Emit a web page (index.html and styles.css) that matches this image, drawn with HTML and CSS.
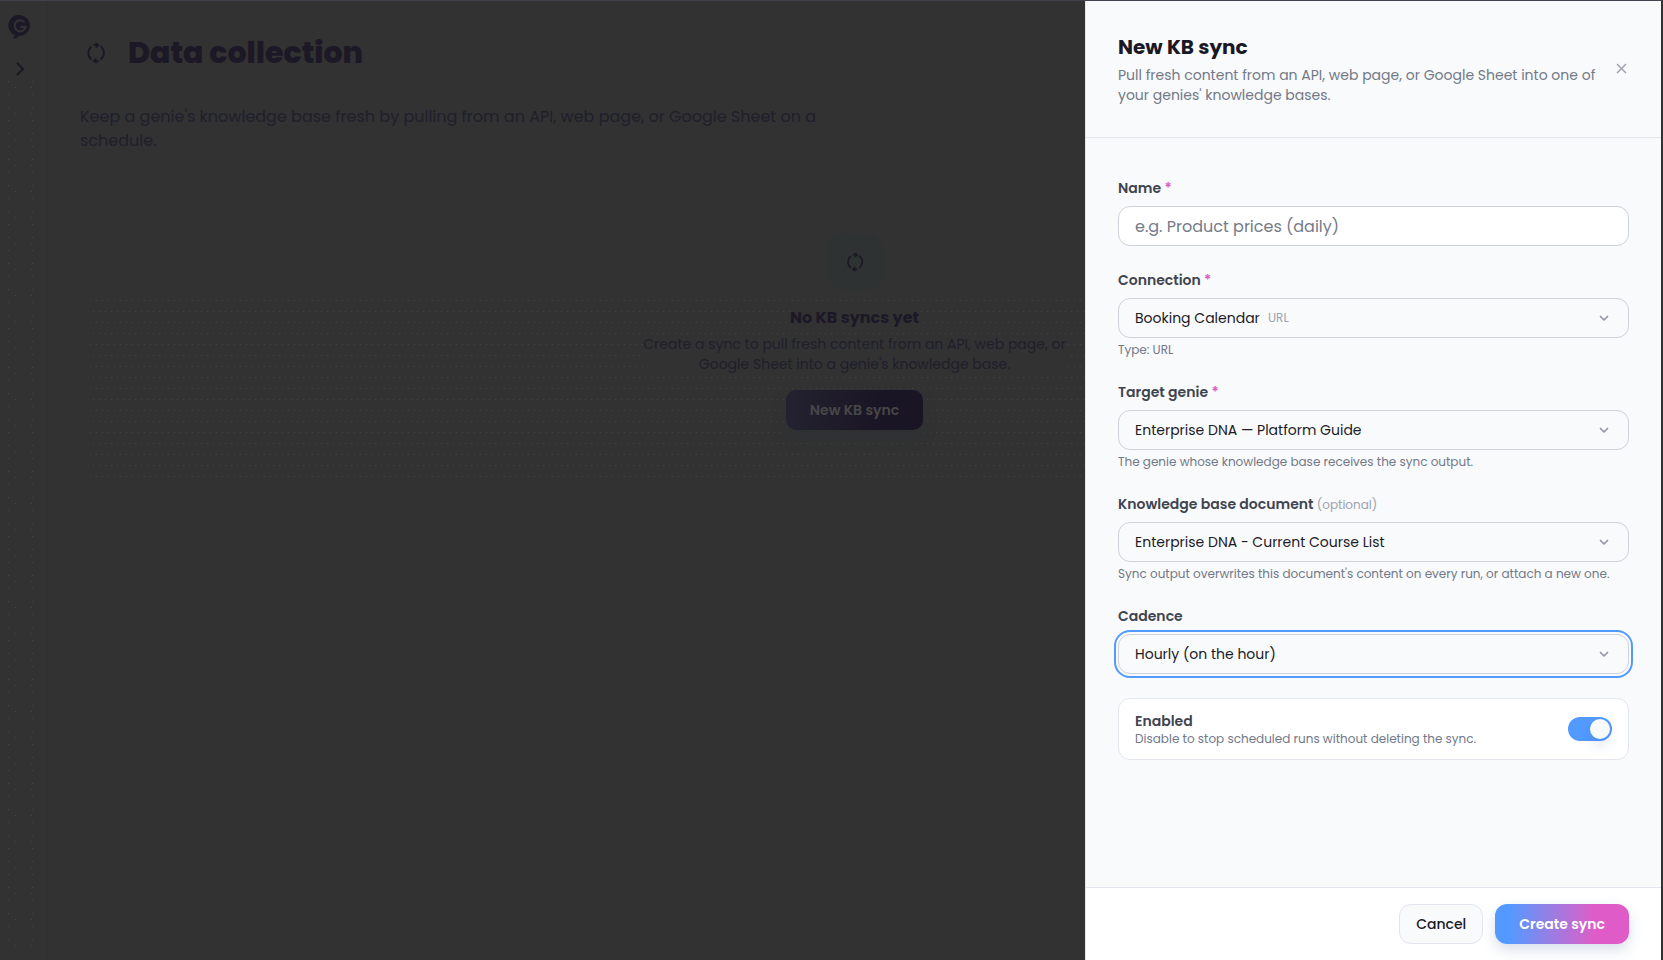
FILE: index.html
```
<!DOCTYPE html>
<html lang="en">
<head>
  <meta charset="UTF-8">
  <meta name="viewport" content="width=device-width, initial-scale=1">
  <title>Data collection</title>
  <link rel="stylesheet" href="styles.css">
</head>
<body>
  <svg class="defs" aria-hidden="true">
    <symbol id="sync" viewBox="0 0 24 24">
      <path d="M17 19A9 9 0 0 0 17 4.500M14.500 3.300A9 9 0 0 0 9 3.500M7 5A9 9 0 0 0 7 19M9.500 20.600A9 9 0 0 0 15 20.500"/>
      <path class="head" d="M11.500 0l4.500 3.500-4.500 3.500zM12.500 17v7L8 20.500z"/>
    </symbol>
    <symbol id="chevron" viewBox="0 0 16 16">
      <path d="M4 6l4 4 4-4"/>
    </symbol>
  </svg>

  <div class="app">
    <nav class="rail">
      <a href="#" class="logo" aria-label="Home">
        <svg width="24" height="24" viewBox="0 0 24 24">
          <path class="bubble" d="M12 0a10.500 10.500 0 1 1-1 21c-2 2-4 2.500-6 2.500 1-1 1.500-2 1.500-3.500A10.500 10.500 0 0 1 12 0z"/>
          <path class="letter" d="M16.500 7.500a5.500 5.500 0 1 0 1 4.500H12.500"/>
        </svg>
      </a>
      <button class="expand" aria-label="Expand menu">
        <svg width="16" height="16" viewBox="0 0 16 16"><path d="M5 2l6 6-6 6"/></svg>
      </button>
      <div class="rail-dots"></div>
    </nav>

    <main class="page">
      <div class="page-title">
        <span class="title-icon"><svg width="22" height="22"><use href="#sync"/></svg></span>
        <h1>Data collection</h1>
      </div>
      <p class="intro">Keep a genie's knowledge base fresh by pulling from an API, web page, or Google Sheet on a<br>schedule.</p>

      <section class="empty">
        <div class="empty-icon"><svg width="20" height="20"><use href="#sync"/></svg></div>
        <h2>No KB syncs yet</h2>
        <p>Create a sync to pull fresh content from an API, web page, or<br>Google Sheet into a genie's knowledge base.</p>
        <button class="new-btn">New KB sync</button>
      </section>
    </main>
  </div>

  <form class="drawer" role="dialog" aria-labelledby="drawer-title">
    <header class="drawer-head">
      <div>
        <h2 id="drawer-title">New KB sync</h2>
        <p>Pull fresh content from an API, web page, or Google Sheet into one of<br>your genies' knowledge bases.</p>
      </div>
      <button type="button" class="close" aria-label="Close">
        <svg width="16" height="16" viewBox="0 0 16 16"><path d="M4 3l9 9M13 3l-9 9"/></svg>
      </button>
    </header>

    <div class="drawer-body">
      <div class="field">
        <label for="name">Name <span class="req">*</span></label>
        <input type="text" id="name" class="control" placeholder="e.g. Product prices (daily)">
      </div>

      <div class="field">
        <label for="connection">Connection <span class="req">*</span></label>
        <div class="select">
          <select id="connection" class="control">
            <option>Booking Calendar</option>
          </select>
          <span class="tag">URL</span>
          <svg class="chevron" width="16" height="16"><use href="#chevron"/></svg>
        </div>
        <p class="hint">Type: URL</p>
      </div>

      <div class="field">
        <label for="genie">Target genie <span class="req">*</span></label>
        <div class="select">
          <select id="genie" class="control">
            <option>Enterprise DNA — Platform Guide</option>
          </select>
          <svg class="chevron" width="16" height="16"><use href="#chevron"/></svg>
        </div>
        <p class="hint">The genie whose knowledge base receives the sync output.</p>
      </div>

      <div class="field">
        <label for="document">Knowledge base document <span class="optional">(optional)</span></label>
        <div class="select">
          <select id="document" class="control">
            <option>Enterprise DNA - Current Course List</option>
          </select>
          <svg class="chevron" width="16" height="16"><use href="#chevron"/></svg>
        </div>
        <p class="hint">Sync output overwrites this document's content on every run, or attach a new one.</p>
      </div>

      <div class="field">
        <label for="cadence">Cadence</label>
        <div class="select">
          <select id="cadence" class="control focused">
            <option>Hourly (on the hour)</option>
          </select>
          <svg class="chevron" width="16" height="16"><use href="#chevron"/></svg>
        </div>
      </div>

      <div class="toggle-card">
        <div>
          <label for="enabled">Enabled</label>
          <p>Disable to stop scheduled runs without deleting the sync.</p>
        </div>
        <input type="checkbox" id="enabled" class="switch" checked>
      </div>
    </div>

    <footer class="drawer-foot">
      <button type="button" class="btn cancel">Cancel</button>
      <button type="submit" class="btn create">Create sync</button>
    </footer>
  </form>
</body>
</html>
```

FILE: styles.css
```
* {
  box-sizing: border-box;
  margin: 0;
  padding: 0;
}

body {
  font-family: Poppins, Inter, sans-serif;
  font-size: 14px;
  line-height: 20px;
  background: #323232;
  color: #1c1826;
  overflow: hidden;
}

button, input, select {
  font: inherit;
  color: inherit;
}

button {
  cursor: pointer;
}

svg {
  display: block;
  fill: none;
  stroke: currentColor;
  stroke-width: 2;
}

.defs {
  position: absolute;
  width: 0;
  height: 0;
}

.head {
  fill: currentColor;
  stroke: none;
}

/* page behind the drawer */
.app {
  display: flex;
  min-height: 100vh;
  border-top: 1px solid #40434f;
}

.rail {
  display: flex;
  flex-direction: column;
  width: 48px;
  padding: 14px 8px;
  border-right: 1px solid #303030;
}

.logo {
  display: block;
  color: #1c1826;
}

.logo .bubble {
  fill: currentColor;
  stroke: none;
}

.logo .letter {
  stroke: #323232;
}

.expand {
  align-self: flex-start;
  margin-top: 18px;
  padding: 4px;
  border: 0;
  background: none;
  line-height: 16px;
}

.rail-dots {
  flex: 1;
  background:
    radial-gradient(circle at 0 0, #444 0 1px, transparent 1px) 0 0 / 24px 13px,
    radial-gradient(circle at 0 0, #444 0 1px, transparent 1px) 7px 6px / 16px 26px;
}

.page {
  flex: 1;
  padding: 32px 34px 32px 32px;
}

.page-title {
  display: flex;
  align-items: center;
  gap: 16px;
}

.title-icon {
  padding: 5px;
}

h1 {
  font-size: 30px;
  line-height: 40px;
  font-weight: 800;
}

.intro {
  margin-top: 32px;
  font-size: 16px;
  line-height: 24px;
  color: #201f2b;
}

.empty {
  display: flex;
  flex-direction: column;
  align-items: center;
  margin-top: 32px;
  padding: 49px;
  text-align: center;
  background:
    linear-gradient(#323232, #323232) 0 0 / 100% 110px no-repeat,
    linear-gradient(#323232, #323232) 0 0 / 8px 100% no-repeat,
    radial-gradient(circle at 0 0, #444 0 1px, transparent 1px) 10px 115px / 6px 22px,
    radial-gradient(circle at 0 0, #444 0 1px, transparent 1px) 13px 126px / 6px 22px;
}

.empty-icon {
  padding: 18px;
  border-radius: 16px;
  background: #2f3233;
}

.empty h2 {
  margin-top: 16px;
  font-size: 16px;
  line-height: 24px;
  background: #323232;
}

.empty p {
  margin-top: 4px;
  color: #201f2b;
  background: #323232;
}

.new-btn {
  height: 40px;
  margin-top: 16px;
  padding: 0 24px;
  border: 0;
  border-radius: 10px;
  background: linear-gradient(90deg, #242230, #1a1524 70%);
  box-shadow: 0 8px 12px #2e3134;
  color: #474747;
  font-weight: 600;
}

/* drawer */
.drawer {
  position: fixed;
  top: 1px;
  right: 2px;
  bottom: 0;
  width: 576px;
  display: flex;
  flex-direction: column;
  border-left: 1px solid #e5e7eb;
  background: #f9fafc;
}

.drawer-head {
  display: flex;
  align-items: center;
  justify-content: space-between;
  padding: 32px;
  border-bottom: 1px solid #e2e5ea;
}

.drawer-head h2 {
  font-size: 20px;
  line-height: 28px;
  color: #1a1824;
}

.drawer-head p {
  margin-top: 4px;
  color: #727987;
}

.close {
  border: 0;
  background: none;
  color: #9ca3af;
}

.close svg, .chevron {
  stroke-width: 1.5;
}

.drawer-body {
  flex: 1;
  display: flex;
  flex-direction: column;
  gap: 24px;
  padding: 40px 32px;
  overflow: auto;
}

.field label, .toggle-card label {
  display: block;
  color: #3f4450;
  font-weight: 600;
}

.req {
  color: #dc5cc4;
}

.optional {
  color: #9ca3af;
  font-size: 12px;
  line-height: 16px;
  font-weight: 400;
}

.control {
  display: block;
  width: 100%;
  height: 40px;
  padding: 0 16px;
  border: 1px solid #cdd1da;
  border-radius: 12px;
  background: #f9fafc;
  color: #1c1b26;
  appearance: none;
}

input.control {
  margin-top: 8px;
  background: #fff;
  font-size: 16px;
}

input.control::placeholder {
  color: #757b88;
}

.focused {
  outline: 2px solid #529aff;
  outline-offset: 2px;
}

.select {
  position: relative;
  margin-top: 8px;
}

.tag {
  position: absolute;
  top: 10px;
  left: 150px;
  color: #9ca3af;
  font-size: 12px;
}

.chevron {
  position: absolute;
  top: 12px;
  right: 17px;
  color: #8b92a0;
  pointer-events: none;
}

.hint, .toggle-card p {
  color: #727987;
  font-size: 12px;
  line-height: 16px;
}

.hint {
  margin-top: 4px;
}

.toggle-card {
  display: flex;
  align-items: center;
  justify-content: space-between;
  padding: 12px 16px;
  border: 1px solid #e5e7ee;
  border-radius: 12px;
  background: #fff;
}

.switch {
  width: 44px;
  height: 24px;
  padding: 2px;
  border-radius: 12px;
  background: #529aff;
  appearance: none;
}

.switch::before {
  content: "";
  display: block;
  width: 20px;
  height: 20px;
  margin-left: auto;
  border-radius: 50%;
  background: #f9fafc;
  box-shadow: 0 8px 12px rgba(30, 60, 120, 0.1);
}

.drawer-foot {
  display: flex;
  justify-content: flex-end;
  gap: 12px;
  padding: 16px 32px;
  border-top: 1px solid #e2e5ee;
  background: #fff;
}

.btn {
  height: 40px;
  border-radius: 12px;
  font-weight: 500;
}

.cancel {
  padding: 0 16px;
  border: 1px solid #e2e5ee;
  background: #f9fafc;
}

.create {
  padding: 0 24px;
  border: 0;
  background: linear-gradient(90deg, #529aff 10%, #a07ae0 45%, #df5cc8 75%);
  box-shadow: 0 6px 14px rgba(40, 80, 140, 0.18);
  color: #fff;
  font-weight: 600;
}
```
